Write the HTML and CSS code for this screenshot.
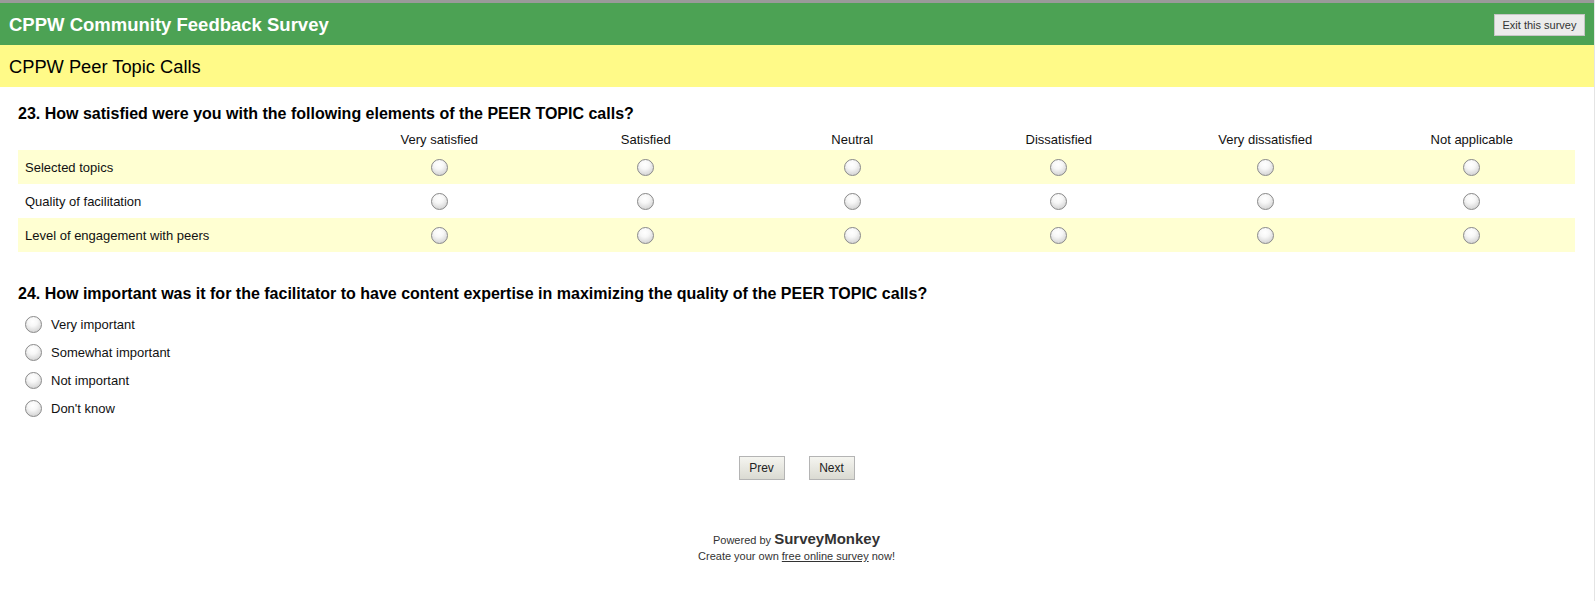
FILE: index.html
```html
<!DOCTYPE html>
<html lang="en">
<head>
    <meta charset="UTF-8">
    <title>CPPW Community Feedback Survey</title>
    <link rel="stylesheet" href="styles.css">
</head>
<body>
<div class="pagina">
    <div class="barra-topo">
        <h1>CPPW Community Feedback Survey</h1>
        <button class="btn-sair">Exit this survey</button>
    </div>

    <div class="barra-pagina">CPPW Peer Topic Calls</div>

    <div class="conteudo">
        <div class="pergunta">
            <h2>23. How satisfied were you with the following elements of the PEER TOPIC calls?</h2>
            <table class="matriz">
                <colgroup>
                    <col class="col-rotulo">
                    <col><col><col><col><col><col>
                </colgroup>
                <thead>
                    <tr>
                        <th></th>
                        <th>Very satisfied</th>
                        <th>Satisfied</th>
                        <th>Neutral</th>
                        <th>Dissatisfied</th>
                        <th>Very dissatisfied</th>
                        <th>Not applicable</th>
                    </tr>
                </thead>
                <tbody>
                    <tr class="alt">
                        <td class="rotulo">Selected topics</td>
                        <td><input type="radio" name="q23a"></td>
                        <td><input type="radio" name="q23a"></td>
                        <td><input type="radio" name="q23a"></td>
                        <td><input type="radio" name="q23a"></td>
                        <td><input type="radio" name="q23a"></td>
                        <td><input type="radio" name="q23a"></td>
                    </tr>
                    <tr>
                        <td class="rotulo">Quality of facilitation</td>
                        <td><input type="radio" name="q23b"></td>
                        <td><input type="radio" name="q23b"></td>
                        <td><input type="radio" name="q23b"></td>
                        <td><input type="radio" name="q23b"></td>
                        <td><input type="radio" name="q23b"></td>
                        <td><input type="radio" name="q23b"></td>
                    </tr>
                    <tr class="alt">
                        <td class="rotulo">Level of engagement with peers</td>
                        <td><input type="radio" name="q23c"></td>
                        <td><input type="radio" name="q23c"></td>
                        <td><input type="radio" name="q23c"></td>
                        <td><input type="radio" name="q23c"></td>
                        <td><input type="radio" name="q23c"></td>
                        <td><input type="radio" name="q23c"></td>
                    </tr>
                </tbody>
            </table>
        </div>

        <div class="pergunta pergunta-24">
            <h2>24. How important was it for the facilitator to have content expertise in maximizing the quality of the PEER TOPIC calls?</h2>
            <label class="opcao"><input type="radio" name="q24"> Very important</label>
            <label class="opcao"><input type="radio" name="q24"> Somewhat important</label>
            <label class="opcao"><input type="radio" name="q24"> Not important</label>
            <label class="opcao"><input type="radio" name="q24"> Don't know</label>
        </div>

        <div class="navegacao">
            <button class="btn-nav">Prev</button>
            <button class="btn-nav">Next</button>
        </div>

        <div class="rodape">
            <div>Powered by <span class="marca">SurveyMonkey</span></div>
            <div>Create your own <a href="#">free online survey</a> now!</div>
        </div>
    </div>
</div>
</body>
</html>
```

FILE: styles.css
```css
body {
    margin: 0;
    font-family: "Liberation Sans", Arial, sans-serif;
    color: #111;
    background-color: #fff;
}

.pagina {
    border-right: 1px solid #e4e4e4;
    min-height: 601px;
    box-sizing: border-box;
}

.barra-topo {
    border-top: 3px solid #9a9a9a;
    background-color: #4ca254;
    height: 42px;
    display: flex;
    align-items: center;
    justify-content: space-between;
    padding: 0 9px 0 9px;
}

.barra-topo h1 {
    margin: 1px 0 0 0;
    font-size: 18.5px;
    font-weight: bold;
    color: #fff;
}

.btn-sair {
    width: 91px;
    height: 22px;
    margin-top: 1px;
    font-family: "Liberation Sans", Arial, sans-serif;
    font-size: 11px;
    color: #333;
    background-color: #ebebeb;
    border: 1px solid #c6c6c6;
    padding: 0;
}

.barra-pagina {
    background-color: #fffa88;
    height: 42px;
    display: flex;
    align-items: center;
    padding: 1px 0 0 9px;
    box-sizing: border-box;
    font-size: 18.3px;
    color: #000;
}

.conteudo {
    padding: 0 19px 0 18px;
}

.pergunta h2 {
    margin: 17px 0 0 0;
    font-size: 16px;
    line-height: 19px;
    font-weight: bold;
    color: #000;
}

.matriz {
    width: 100%;
    border-collapse: collapse;
    table-layout: fixed;
    font-size: 13px;
}

.col-rotulo {
    width: 318px;
}

.matriz th {
    height: 24px;
    padding: 0 0 3px 0;
    vertical-align: bottom;
    font-weight: normal;
    line-height: 15px;
    text-align: center;
    color: #111;
}

.matriz td {
    height: 34px;
    padding: 0;
    text-align: center;
    vertical-align: middle;
}

.matriz td.rotulo {
    text-align: left;
    padding-left: 7px;
}

.matriz tr.alt td {
    background-color: #ffffd2;
}

input[type="radio"] {
    appearance: none;
    -webkit-appearance: none;
    width: 17px;
    height: 17px;
    margin: 0;
    border-radius: 50%;
    border: 1px solid #8a8a8a;
    background: radial-gradient(circle at 45% 30%, #ffffff 0%, #f7f7f7 35%, #d8d8d8 75%, #bdbdbd 100%);
    vertical-align: middle;
    box-sizing: border-box;
}

.pergunta-24 h2 {
    margin: 32px 0 7px 0;
}

.opcao {
    display: flex;
    align-items: center;
    gap: 9px;
    height: 28px;
    padding-left: 7px;
    font-size: 13px;
    color: #111;
}

.navegacao {
    display: flex;
    justify-content: center;
    gap: 24px;
    margin-top: 34px;
}

.btn-nav {
    width: 46px;
    height: 24px;
    padding: 0;
    font-family: "Liberation Sans", Arial, sans-serif;
    font-size: 12px;
    color: #222;
    background: linear-gradient(#f5f5f0, #dadad2);
    border: 1px solid #b4b4b4;
}

.rodape {
    margin-top: 50px;
    text-align: center;
    font-size: 11px;
    color: #333;
}

.rodape div:first-child {
    line-height: 18px;
}

.rodape div:last-child {
    line-height: 14px;
}

.marca {
    font-size: 15px;
    font-weight: bold;
    color: #333;
}

.rodape a {
    color: #333;
    text-decoration: underline;
}
```
